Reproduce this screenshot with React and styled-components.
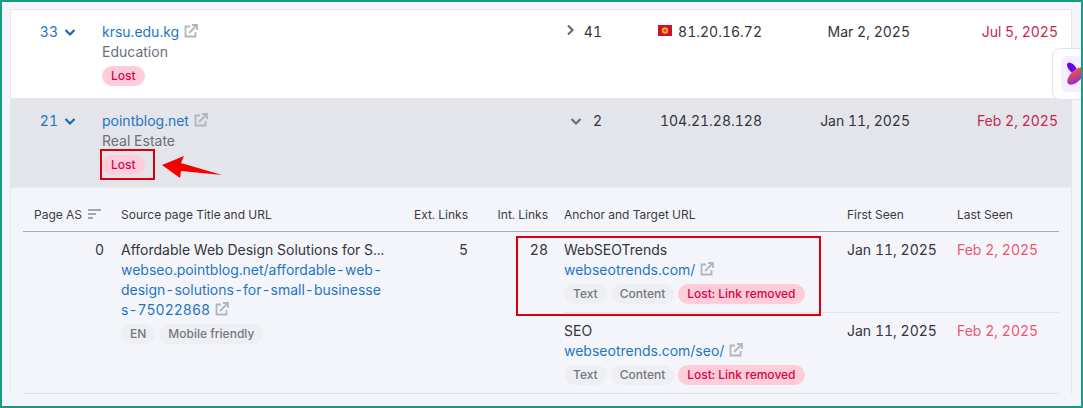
import React from 'react';
import styled, { createGlobalStyle } from 'styled-components';

const GlobalStyle = createGlobalStyle`
    html, body { margin: 0; padding: 0; background: #f4f5fa; }
    * { box-sizing: border-box; }
`;

const Frame = styled.div`
    position: relative;
    width: 1083px;
    height: 408px;
    border: 2px solid #1a9b85;
    background: #f4f5fa;
    overflow: hidden;
    font-family: Inter, "Liberation Sans", sans-serif;
    font-size: 14px;
    line-height: 20px;
    font-variant-numeric: tabular-nums;
    color: #33343c;
`;

const Table = styled.div`
    margin: 7px 9px 0 8px;
    border-top: 1px solid #e4e5ea;
    border-left: 1px solid #e6e7ec;
    border-right: 1px solid #e6e7ec;
`;

const MainRow = styled.div`
    display: grid;
    grid-template-columns: 91px 440px 60px 160px 148px 148px;
    height: ${props => props.open ? '89px' : '88px'};
    padding: ${props => props.open ? '13px' : '12px'} 13px 0 0;
    background: ${props => props.open ? '#e4e5ea' : '#ffffff'};
`;

const Rank = styled.div`
    display: flex;
    justify-content: flex-end;
    align-items: flex-start;
    gap: 6px;
    padding-right: 26px;
    color: #1f75c4;
`;

const Stack = styled.div`
    display: flex;
    flex-direction: column;
    align-items: flex-start;
`;

const Link = styled.span`
    color: #1f75c4;
`;

const Muted = styled.span`
    color: #6c6e79;
`;

const RightCell = styled.div`
    display: flex;
    justify-content: flex-end;
    align-items: flex-start;
    gap: ${props => props.gap || 0}px;
    color: ${props => props.color || '#33343c'};
`;

const Pills = styled.div`
    display: flex;
    gap: 4px;
    margin-top: 4px;
`;

const Pill = styled.span`
    height: 20px;
    padding: 0 9px;
    border-radius: 10px;
    font-size: 12px;
    font-weight: 500;
    line-height: 20px;
    white-space: nowrap;
    background: ${props => props.lost ? '#ffccd9' : '#edeff3'};
    color: ${props => props.lost ? '#d1064f' : '#757781'};
`;

const Detail = styled.div`
    padding: 0 12px;
    border-top: 1px solid #ebecf0;
`;

const DetailHead = styled.div`
    display: grid;
    grid-template-columns: 98px 265px 82px 80px 299px 110px 102px;
    height: 44px;
    padding-top: 17px;
    border-bottom: 1px solid #a9abb4;
    font-size: 12px;
`;

const HeadCell = styled.div`
    display: flex;
    justify-content: ${props => props.right ? 'flex-end' : 'flex-start'};
    gap: 6px;
    padding-left: ${props => props.inset || 0}px;
    color: #3a3b44;
`;

const DetailRow = styled.div`
    display: grid;
    grid-template-columns: 98px 265px 82px 80px 1fr;
    border-bottom: 1px solid #dfe0e6;
`;

const NumCell = styled.div`
    padding-top: 8px;
    padding-right: ${props => props.pad || 0}px;
    text-align: right;
`;

const SourceCell = styled.div`
    padding-top: 8px;
    white-space: nowrap;
`;

const Anchors = styled.div`
    padding-left: 16px;
`;

const AnchorRow = styled.div`
    display: grid;
    grid-template-columns: 283px 110px 102px;
    height: ${props => props.last ? '80px' : '81px'};
    padding-top: 8px;
    border-bottom: ${props => props.last ? 'none' : '1px solid #e4e5ea'};
`;

const LastSeen = styled.div`
    color: #f0556f;
`;

const Ext = styled.svg`
    display: inline-block;
    width: 14px;
    height: 14px;
    margin-left: 5px;
    vertical-align: -1px;
    fill: none;
    stroke: #b4b6be;
    stroke-width: 1.8;
`;

const Chevron = styled.svg`
    flex: none;
    width: 12px;
    height: 12px;
    margin-top: ${props => props.top}px;
    fill: none;
    stroke: ${props => props.color};
    stroke-width: 2.2;
`;

const SortIcon = styled.svg`
    width: 13px;
    height: 12px;
    margin-top: 3px;
    stroke: #8a8c96;
    stroke-width: 1.5;
`;

const Flag = styled.svg`
    width: 14px;
    height: 11px;
    margin-top: 3px;
`;

const RedBox = styled.div`
    position: absolute;
    left: ${props => props.x}px;
    top: ${props => props.y}px;
    width: ${props => props.w}px;
    height: ${props => props.h}px;
    border: 2px solid #d9000d;
`;

const Arrow = styled.svg`
    position: absolute;
    left: 158px;
    top: 152px;
    width: 64px;
    height: 26px;
`;

const Widget = styled.div`
    position: absolute;
    left: 1050px;
    top: 46px;
    width: 40px;
    height: 52px;
    padding: 7px 8px;
    background: #ffffff;
    border: 1px solid #e3defa;
    border-radius: 8px;
`;

const WidgetTile = styled.div`
    width: 36px;
    height: 36px;
    border-radius: 6px;
    background: #f3effe;
`;

const WidgetLogo = styled.svg`
    display: block;
    width: 36px;
    height: 36px;
`;

const ExtIcon = () => (
    <Ext viewBox="0 0 14 14">
        <path d="M6 2.5H1.5v10h10V8" />
        <path d="M5 9 12.5 1.5M8 1h5v5" />
    </Ext>
);

const ChevronDown = ({ color }) => (
    <Chevron viewBox="0 0 12 12" color={color} top={4}><path d="M1.5 4 6 8.5 10.5 4" /></Chevron>
);

const ChevronRight = ({ color }) => (
    <Chevron viewBox="0 0 12 12" color={color} top={2}><path d="M4 1.5 8.5 6 4 10.5" /></Chevron>
);

const anchors = [
    { title: 'WebSEOTrends', url: 'webseotrends.com/' },
    { title: 'SEO', url: 'webseotrends.com/seo/' },
];

export default function App() {
    return (
        <Frame>
            <GlobalStyle />
            <Table>
                <MainRow>
                    <Rank>33 <ChevronDown color="#1668b5" /></Rank>
                    <Stack>
                        <div><Link>krsu.edu.kg</Link><ExtIcon /></div>
                        <Muted>Education</Muted>
                        <Pills><Pill lost>Lost</Pill></Pills>
                    </Stack>
                    <RightCell gap={8}><ChevronRight color="#6c6e79" /> 41</RightCell>
                    <RightCell gap={6}>
                        <Flag viewBox="0 0 14 11">
                            <rect width="14" height="11" fill="#d0112b" />
                            <circle cx="7" cy="5.5" r="3.2" fill="#f6b01e" />
                            <circle cx="7" cy="5.5" r="1.5" fill="#d9541e" />
                        </Flag>
                        81.20.16.72
                    </RightCell>
                    <RightCell>Mar 2, 2025</RightCell>
                    <RightCell color="#c9264f">Jul 5, 2025</RightCell>
                </MainRow>
                <MainRow open>
                    <Rank>21 <ChevronDown color="#1668b5" /></Rank>
                    <Stack>
                        <div><Link>pointblog.net</Link><ExtIcon /></div>
                        <Muted>Real Estate</Muted>
                        <Pills><Pill lost>Lost</Pill></Pills>
                    </Stack>
                    <RightCell gap={11}><ChevronDown color="#6c6e79" /> 2</RightCell>
                    <RightCell>104.21.28.128</RightCell>
                    <RightCell>Jan 11, 2025</RightCell>
                    <RightCell color="#c9264f">Feb 2, 2025</RightCell>
                </MainRow>
                <Detail>
                    <DetailHead>
                        <HeadCell inset={11}>
                            Page AS
                            <SortIcon viewBox="0 0 13 12">
                                <path d="M0 2h13M0 6h8M0 10h5" />
                            </SortIcon>
                        </HeadCell>
                        <HeadCell>Source page Title and URL</HeadCell>
                        <HeadCell right>Ext. Links</HeadCell>
                        <HeadCell right>Int. Links</HeadCell>
                        <HeadCell inset={16}>Anchor and Target URL</HeadCell>
                        <HeadCell>First Seen</HeadCell>
                        <HeadCell>Last Seen</HeadCell>
                    </DetailHead>
                    <DetailRow>
                        <NumCell pad={17}>0</NumCell>
                        <SourceCell>
                            <div>Affordable Web Design Solutions for S...</div>
                            <Link>
                                webseo.pointblog.net/affordable-web-<br />
                                design-solutions-for-small-businesse<br />
                                s-75022868
                            </Link>
                            <ExtIcon />
                            <Pills>
                                <Pill>EN</Pill>
                                <Pill>Mobile friendly</Pill>
                            </Pills>
                        </SourceCell>
                        <NumCell>5</NumCell>
                        <NumCell>28</NumCell>
                        <Anchors>
                            {anchors.map((a, i) => (
                                <AnchorRow key={a.url} last={i === anchors.length - 1}>
                                    <div>
                                        <div>{a.title}</div>
                                        <div><Link>{a.url}</Link><ExtIcon /></div>
                                        <Pills>
                                            <Pill>Text</Pill>
                                            <Pill>Content</Pill>
                                            <Pill lost>Lost: Link removed</Pill>
                                        </Pills>
                                    </div>
                                    <div>Jan 11, 2025</div>
                                    <LastSeen>Feb 2, 2025</LastSeen>
                                </AnchorRow>
                            ))}
                        </Anchors>
                    </DetailRow>
                </Detail>
            </Table>
            <RedBox x={98} y={147} w={55} h={31} />
            <RedBox x={514} y={234} w={305} h={80} />
            <Arrow viewBox="0 0 64 26">
                <polygon points="2,11 24,2 21,9 62,21 21,17 20,24" fill="#f50000" />
            </Arrow>
            <Widget>
                <WidgetTile>
                    <WidgetLogo viewBox="0 0 36 36">
                        <defs>
                            <linearGradient id="orb" x1="0" y1="1" x2="1" y2="0">
                                <stop offset="0" stopColor="#8a1fe0" />
                                <stop offset="1" stopColor="#f5682a" />
                            </linearGradient>
                        </defs>
                        <ellipse cx="11" cy="12" rx="3.5" ry="6.5" transform="rotate(-40 11 12)" fill="#6a00f4" />
                        <ellipse cx="15" cy="20" rx="11" ry="5.5" transform="rotate(-45 15 20)" fill="url(#orb)" />
                    </WidgetLogo>
                </WidgetTile>
            </Widget>
        </Frame>
    );
}
